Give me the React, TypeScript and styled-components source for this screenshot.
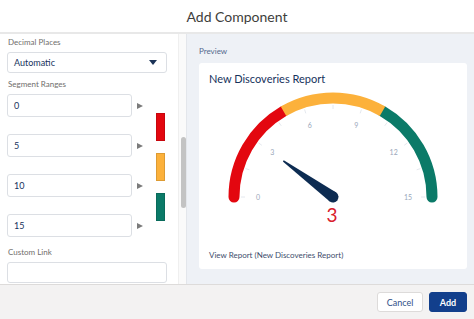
import React from "react";
import styled, { createGlobalStyle } from "styled-components";

const GlobalStyle = createGlobalStyle`
  html, body { margin: 0; padding: 0; background: #ffffff; }
  body {
    font-family: Lato, "Open Sans", sans-serif;
    width: 474px;
    height: 319px;
    overflow: hidden;
  }
  * { box-sizing: border-box; }
`;

const Modal = styled.div`
  width: 474px;
  height: 319px;
  display: grid;
  grid-template-rows: 34px 250px 35px;
`;

const Header = styled.header`
  display: flex;
  align-items: center;
  justify-content: center;
  border-bottom: 2px solid #e8e8e8;
  font-size: 14px;
  color: #3e3e3c;
  padding-top: 1px;
`;

const Body = styled.main`
  display: grid;
  grid-template-columns: 178px 9px 1fr;
  min-height: 0;
`;

const LeftPanel = styled.section`
  padding: 3px 11px 0 7px;
  display: flex;
  flex-direction: column;
  overflow: hidden;
`;

const FieldLabel = styled.div<{ $mt?: number }>`
  font-size: 8px;
  line-height: 11px;
  color: #706e6b;
  padding-left: 1px;
  margin-top: ${(p) => p.$mt ?? 0}px;
  margin-bottom: 4px;
`;

const SelectBox = styled.div`
  height: 21px;
  border: 1px solid #dcdfe4;
  border-radius: 3px;
  display: flex;
  align-items: center;
  justify-content: space-between;
  padding: 0 9px 0 6px;
  font-size: 9px;
  color: #16325c;
`;

const DownCaret = styled.span`
  width: 0;
  height: 0;
  border-left: 4px solid transparent;
  border-right: 4px solid transparent;
  border-top: 5px solid #1b3357;
`;

const TextBox = styled.div<{ $w?: number; $h?: number }>`
  width: ${(p) => (p.$w ? `${p.$w}px` : "100%")};
  height: ${(p) => p.$h ?? 21}px;
  border: 1px solid #dcdfe4;
  border-radius: 3px;
  display: flex;
  align-items: center;
  padding: 0 6px;
  font-size: 9px;
  color: #16325c;
  background: #fff;
`;

const SegmentArea = styled.div`
  display: flex;
  align-items: flex-start;
`;

const InputsColumn = styled.div`
  display: flex;
  flex-direction: column;
  gap: 17px;
`;

const SegmentRow = styled.div`
  display: flex;
  align-items: center;
`;

const RightArrow = styled.span`
  margin-left: 5px;
  width: 0;
  height: 0;
  border-top: 3.5px solid transparent;
  border-bottom: 3.5px solid transparent;
  border-left: 6px solid #7b7b7b;
`;

const SwatchColumn = styled.div`
  display: flex;
  flex-direction: column;
  gap: 12px;
  padding-top: 19px;
  margin-left: 13px;
`;

const Swatch = styled.div<{ $color: string }>`
  width: 9px;
  height: 28px;
  background: ${(p) => p.$color};
  border: 1px solid rgba(0, 0, 0, 0.12);
`;

const ScrollTrack = styled.div`
  background: #fafafa;
  border-left: 1px solid #efefef;
  border-right: 1px solid #e3e6eb;
  padding: 103px 1px 0 2px;
`;

const ScrollThumb = styled.div`
  width: 5px;
  height: 71px;
  border-radius: 3px;
  background: #c3c3c3;
`;

const RightPanel = styled.section`
  background: #eef1f6;
  padding: 12px 7px 15px 12px;
  display: flex;
  flex-direction: column;
`;

const PreviewLabel = styled.div`
  font-size: 8px;
  line-height: 11px;
  color: #54698d;
  margin-bottom: 6px;
`;

const Card = styled.div`
  flex: 1;
  background: #ffffff;
  border-radius: 3px;
  display: flex;
  flex-direction: column;
  padding: 8px 0 0 0;
`;

const CardTitle = styled.div`
  font-size: 11px;
  line-height: 16px;
  color: #16325c;
  padding-left: 10px;
  margin-bottom: 1px;
`;

const GaugeSvg = styled.svg`
  display: block;
`;

const ReportLink = styled.div`
  font-size: 8px;
  line-height: 12px;
  color: #3e4d6c;
  padding-left: 10px;
  margin-top: 21px;
`;

const Footer = styled.footer`
  background: #f3f2f2;
  border-top: 1px solid #dddbda;
  display: flex;
  align-items: center;
  justify-content: flex-end;
  gap: 6px;
  padding-right: 7px;
`;

const Button = styled.button<{ $primary?: boolean; $w: number }>`
  width: ${(p) => p.$w}px;
  height: 20px;
  border-radius: 3px;
  font-family: Lato, "Open Sans", sans-serif;
  font-size: 9px;
  font-weight: ${(p) => (p.$primary ? 700 : 400)};
  color: ${(p) => (p.$primary ? "#ffffff" : "#2f4f88")};
  background: ${(p) => (p.$primary ? "#123f8c" : "#ffffff")};
  border: 1px solid ${(p) => (p.$primary ? "#123f8c" : "#dddbda")};
  padding: 0;
`;

const CX = 134;
const CY = 109;
const R = 99;

function pt(deg: number, r: number) {
  const a = (deg * Math.PI) / 180;
  return { x: CX + r * Math.cos(a), y: CY - r * Math.sin(a) };
}

function arc(from: number, to: number) {
  const a = pt(from, R);
  const b = pt(to, R);
  return `M ${a.x} ${a.y} A ${R} ${R} 0 0 1 ${b.x} ${b.y}`;
}

const labels = [0, 3, 6, 9, 12, 15];

function Gauge() {
  const ticks = Array.from({ length: 11 }, (_, i) => i * 18);
  return (
    <GaugeSvg width="268" height="140" viewBox="0 0 268 140">
      <path d={arc(180, 120)} stroke="#e3070f" strokeWidth="11" fill="none" strokeLinecap="round" />
      <path d={arc(60, 0)} stroke="#0b7a68" strokeWidth="11" fill="none" strokeLinecap="round" />
      <path d={arc(120, 60)} stroke="#fcb13b" strokeWidth="11" fill="none" />
      {ticks.map((d) => {
        const a = pt(d, 88);
        const b = pt(d, 92);
        return <line key={d} x1={a.x} y1={a.y} x2={b.x} y2={b.y} stroke="#dde2ea" strokeWidth="0.8" />;
      })}
      {labels.map((v) => {
        const p = pt(180 - v * 12, 75);
        return (
          <text
            key={v}
            x={p.x}
            y={p.y + 2.5}
            textAnchor="middle"
            fontSize="7"
            fill="#9aa7ba"
            fontFamily="Lato, sans-serif"
          >
            {v}
          </text>
        );
      })}
      <g transform={`translate(${CX} ${CY}) rotate(-144)`}>
        <path d="M 0 -5.5 L 61 -0.9 Q 62.5 0 61 0.9 L 0 5.5 Z" fill="#0d2c52" />
        <circle cx="0" cy="0" r="5.5" fill="#0d2c52" />
      </g>
      <text x={CX - 1} y="134" textAnchor="middle" fontSize="19" fill="#d9202c" fontFamily="Lato, sans-serif">
        3
      </text>
    </GaugeSvg>
  );
}

const segments = [
  { value: "0" },
  { value: "5" },
  { value: "10" },
  { value: "15" },
];

const swatches = ["#e3070f", "#fcb13b", "#0b7a68"];

export default function App() {
  return (
    <>
      <GlobalStyle />
      <Modal>
        <Header>Add Component</Header>
        <Body>
          <LeftPanel>
            <FieldLabel>Decimal Places</FieldLabel>
            <SelectBox>
              <span>Automatic</span>
              <DownCaret />
            </SelectBox>
            <FieldLabel $mt={6}>Segment Ranges</FieldLabel>
            <SegmentArea>
              <InputsColumn>
                {segments.map((s) => (
                  <SegmentRow key={s.value}>
                    <TextBox $w={125} $h={23}>{s.value}</TextBox>
                    <RightArrow />
                  </SegmentRow>
                ))}
              </InputsColumn>
              <SwatchColumn>
                {swatches.map((c) => (
                  <Swatch key={c} $color={c} />
                ))}
              </SwatchColumn>
            </SegmentArea>
            <FieldLabel $mt={10}>Custom Link</FieldLabel>
            <TextBox $h={21} />
          </LeftPanel>
          <ScrollTrack>
            <ScrollThumb />
          </ScrollTrack>
          <RightPanel>
            <PreviewLabel>Preview</PreviewLabel>
            <Card>
              <CardTitle>New Discoveries Report</CardTitle>
              <Gauge />
              <ReportLink>View Report (New Discoveries Report)</ReportLink>
            </Card>
          </RightPanel>
        </Body>
        <Footer>
          <Button $w={46}>Cancel</Button>
          <Button $w={38} $primary>
            Add
          </Button>
        </Footer>
      </Modal>
    </>
  );
}
